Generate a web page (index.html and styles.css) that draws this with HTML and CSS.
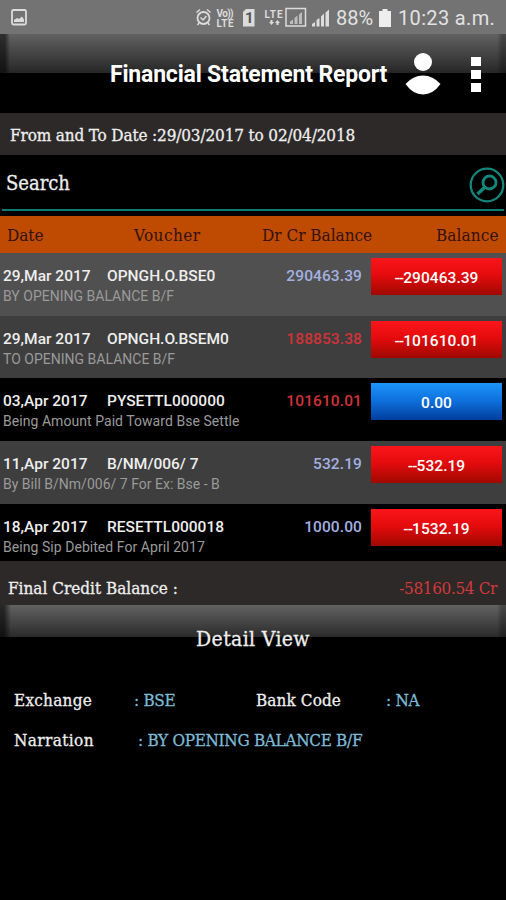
FILE: index.html
```html
<!DOCTYPE html>
<html lang="en">
<head>
<meta charset="utf-8">
<title>Financial Statement Report</title>
<link rel="stylesheet" href="styles.css">
</head>
<body>
<div class="status">
  <svg class="status-icons" width="330" height="34" viewBox="0 0 330 34">
    <g fill="none" stroke="#dcdcdc" stroke-width="1.8">
      <rect x="12" y="10" width="14" height="14.500" rx="1.500"/>
      <circle cx="203.500" cy="18" r="6"/>
      <path d="M200.500 17.500l2.500 2.500 3.500-4M196.500 12.500l3.500-3M207 9.500l3.500 3M199 23l-1.500 2M208 23l1.500 2" stroke-width="1.500"/>
      <rect x="286" y="8.500" width="19.500" height="17.500" stroke-width="1.500"/>
    </g>
    <g fill="#dcdcdc">
      <path d="M14 22v-2l3-2 2 1 3-2.500 2 3V22z"/>
      <path d="M243 12l3-3h8.500v17.500H243z"/>
      <path d="M269 22h1.500v-2h2v2h1.500l-2.500 3zM275 23l2.500-3 2.500 3h-1.500v2h-2v-2z"/>
      <path d="M290 24v-2.500l3-2V24zM294.500 24v-6l3-2.500V24zM299 24V14.500l3-2.500v12z" opacity=".7"/>
      <path d="M312 26.500v-2.500l3-2v4.500zM316.500 26.500V20l3-2v8.500zM321 26.500V16.500l3-3v13zM325.500 26.500v-14l3.500-3v17z"/>
    </g>
    <text class="t-small" x="216.500" y="17" textLength="17">Vo))</text>
    <text class="t-small" x="216.500" y="27" textLength="17">LTE</text>
    <text class="t-small" x="264.500" y="18" textLength="18">LTE</text>
    <text class="t-sim" x="245" y="23">1</text>
  </svg>
  <span class="battery-text">88%</span>
  <svg class="battery" width="12" height="18" viewBox="0 0 12 18"><path d="M3.500 0h5v2H12v16H0V2h3.500z" fill="#eee"/></svg>
  <span class="clock">10:23 a.m.</span>
</div>

<header class="header">
  <h1>Financial Statement Report</h1>
  <svg class="user" width="36" height="44" viewBox="0 0 36 44" fill="#fff"><circle cx="18" cy="10" r="9"/><path d="M.5 32Q8 23.500 18 23.500T35.500 32Q28 42.500 18 42.500T.5 32z"/></svg>
  <svg class="more" width="10" height="36" viewBox="0 0 10 36" fill="#fff"><path d="M0 0h10v9H0zM0 13h10v9H0zM0 26h10v9H0z"/></svg>
</header>

<div class="range"><span>From and To Date :29/03/2017 to 02/04/2018</span></div>

<div class="search">
  <div class="field">
    <span>Search</span>
    <svg width="36" height="36" viewBox="0 0 36 36" fill="none" stroke="#14867c"><circle cx="18" cy="18" r="16.300" stroke-width="2.300"/><circle cx="20.500" cy="15.500" r="6.500" stroke-width="2.800"/><path d="M15.500 20.500l-7 6.500" stroke-width="3.600"/></svg>
  </div>
</div>

<div class="thead"><span class="c1">Date</span><span class="c2">Voucher</span><span class="c3">Dr Cr Balance</span><span class="c4">Balance</span></div>

<main>
  <div class="row light">
    <div class="info"><div class="top"><span class="date">29,Mar 2017</span><span class="voucher">OPNGH.O.BSE0</span></div><div class="note">BY OPENING BALANCE B/F</div></div>
    <span class="amount">290463.39</span><span class="balance"><i>--</i>290463.39</span>
  </div>
  <div class="row mid">
    <div class="info"><div class="top"><span class="date">29,Mar 2017</span><span class="voucher">OPNGH.O.BSEM0</span></div><div class="note">TO OPENING BALANCE B/F</div></div>
    <span class="amount debit">188853.38</span><span class="balance"><i>--</i>101610.01</span>
  </div>
  <div class="row dark">
    <div class="info"><div class="top"><span class="date">03,Apr 2017</span><span class="voucher">PYSETTL000000</span></div><div class="note mixed">Being Amount Paid Toward Bse Settle</div></div>
    <span class="amount debit">101610.01</span><span class="balance zero">0.00</span>
  </div>
  <div class="row mid">
    <div class="info"><div class="top"><span class="date">11,Apr 2017</span><span class="voucher">B/NM/006/ 7</span></div><div class="note">By Bill B/Nm/006/ 7 For Ex: Bse - B</div></div>
    <span class="amount">532.19</span><span class="balance"><i>--</i>532.19</span>
  </div>
  <div class="row dark last">
    <div class="info"><div class="top"><span class="date">18,Apr 2017</span><span class="voucher">RESETTL000018</span></div><div class="note mixed">Being Sip Debited For April 2017</div></div>
    <span class="amount">1000.00</span><span class="balance"><i>--</i>1532.19</span>
  </div>
</main>

<div class="final"><span>Final Credit Balance :</span><span class="f-value">-58160.54 Cr</span></div>

<section class="detail">
  <h2>Detail View</h2>
  <div class="line"><span class="key k1">Exchange</span><span class="val w1">: BSE</span><span class="key k2">Bank Code</span><span class="val">: NA</span></div>
  <div class="line"><span class="key k3">Narration</span><span class="val">: BY OPENING BALANCE B/F</span></div>
</section>
</body>
</html>
```
FILE: styles.css
```css
* { box-sizing: border-box; }
body { margin: 0; width: 506px; height: 900px; overflow: hidden; background: #000; color: #eee; font-family: Roboto, sans-serif; white-space: nowrap; }
svg { display: block; flex: none; }

.status { height: 34px; background: #737373; display: flex; align-items: center; color: #e2e2e2; font-size: 20px; }
.t-small { font: 700 10px Roboto, sans-serif; fill: #dcdcdc; }
.t-sim { font: 700 15px Roboto, sans-serif; fill: #555; }
.battery-text { width: 49px; padding: 2px 0 0 6px; letter-spacing: 0; }
.battery { margin-top: 2px; }
.clock { padding: 2px 0 0 7px; letter-spacing: 0.35px; }

.header { height: 79px; display: flex; background: linear-gradient(90deg, #0008 0, #0008 5px, #0000 10px, #0000 497px, #0004 502px) 0 0 / 100% 39px no-repeat, linear-gradient(#626262, #262626) 0 0 / 100% 39px no-repeat, #000; }
h1 { margin: 0; padding: 26px 0 0 110px; width: 405px; font-size: 23px; line-height: 30px; font-weight: 700; color: #fff; letter-spacing: -0.19px; }
.user { margin: 18px 0 0; }
.more { margin: 23px 0 0 30px; }

.range, .search, .thead, .final, .detail { font-family: "DejaVu Serif Condensed", "DejaVu Serif", serif; font-stretch: condensed; }
.range, .search, .final, .detail { -webkit-text-stroke: 0.3px; }
.range { height: 42px; background: #2c2928; padding-left: 10px; font-size: 17px; line-height: 44px; letter-spacing: -0.14px; }
.search { height: 61px; padding: 0 2px 5px; }
.field { height: 56px; border-bottom: 2px solid #107b73; display: flex; justify-content: space-between; padding: 12px 0 0 4px; font-size: 20px; line-height: 33px; }
.field svg { margin-right: -1px; }
.thead { height: 37px; background: #bf4a02; display: flex; color: #32130a; font-size: 17px; line-height: 39px; padding-left: 7px; }
.c1 { width: 127px; }
.c2 { width: 128px; letter-spacing: 0.45px; }
.c3 { width: 174px; }
.c4 { letter-spacing: 0.1px; }

.row { height: 63px; display: flex; border-top: 1px solid transparent; }
.row.light { background: #515050; }
.row.mid { background: #3e3e3e; }
.row.mid:nth-child(2) { height: 62px; }
.row.last { height: 57px; }
.info { width: 262px; padding: 12px 0 0 3px; }
.top { display: flex; font-size: 15.5px; line-height: 20px; font-weight: 500; }
.date { width: 104px; }
.note { font-size: 14px; line-height: 20px; color: #9a9a9a; letter-spacing: 0.01px; }
.note.mixed { letter-spacing: 0.05px; }
.amount { width: 100px; text-align: right; padding-top: 12px; font-size: 15.5px; line-height: 20px; font-weight: 500; color: #a3b0e0; letter-spacing: 0.1px; }
.amount.debit { color: #cf3338; }
.balance { width: 131px; height: 37px; margin: 4px 0 0 9px; display: flex; justify-content: center; background: linear-gradient(#fb161b, #e50b0d 45%, #9f0900); font-size: 15.5px; line-height: 40px; font-weight: 500; color: #fff; letter-spacing: 0.05px; }
.balance i { font-style: normal; letter-spacing: -0.9px; }
.balance.zero { background: linear-gradient(#1c95fa, #0e70dc 48%, #003e9e); }

.final { height: 44px; background: #2c2928; display: flex; justify-content: space-between; padding: 0 9px 0 8px; font-size: 17px; line-height: 55px; }
.f-value { color: #d5383b; letter-spacing: -0.35px; -webkit-text-stroke: 0; }

.detail { height: 295px; background: linear-gradient(90deg, #0009 0, #0009 4px, #0000 11px, #0000 497px, #0004 502px) 0 0 / 100% 32px no-repeat, linear-gradient(#626262, #2a2a2a) 0 0 / 100% 32px no-repeat, #000; }
h2 { margin: 0; height: 75px; padding-top: 19px; text-align: center; font-size: 21px; line-height: 30px; font-weight: 400; letter-spacing: 0.35px; }
.line { display: flex; height: 40px; line-height: 40px; padding-left: 14px; font-size: 17px; }
.key { letter-spacing: 0.25px; }
.val { color: #7dbbd6; letter-spacing: -0.3px; }
.k1 { width: 120px; }
.w1 { width: 122px; }
.k2 { width: 130px; letter-spacing: 0.1px; }
.k3 { width: 124px; letter-spacing: 0.4px; }
```
